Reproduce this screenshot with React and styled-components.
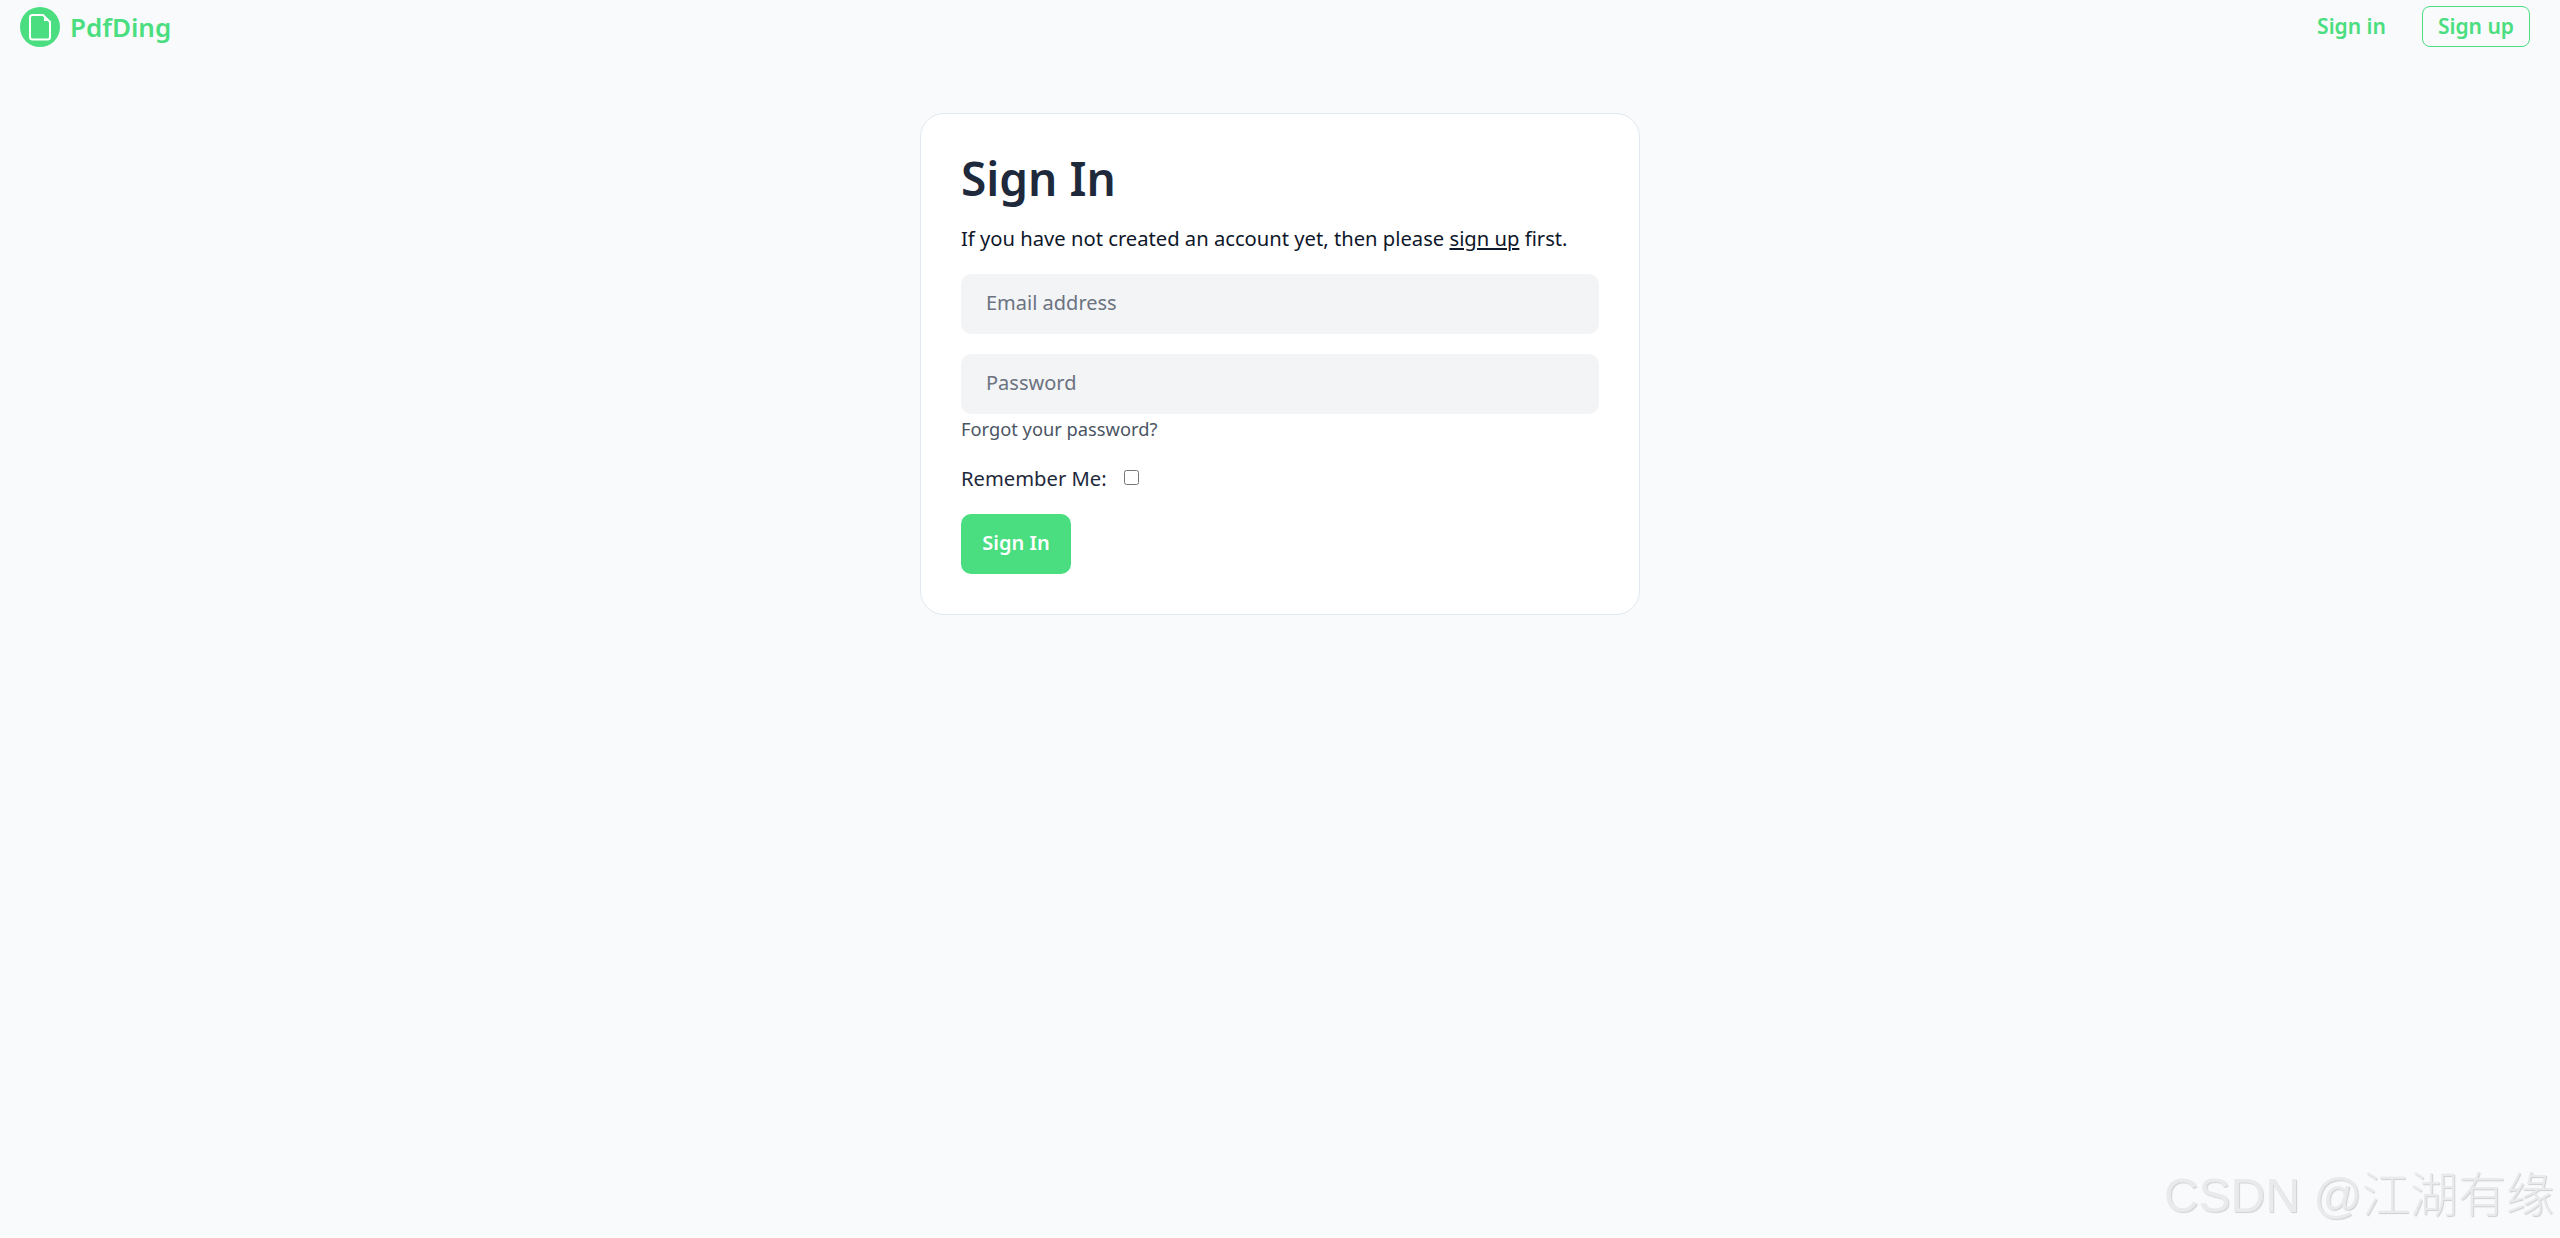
import styled, { createGlobalStyle } from 'styled-components'

const GlobalStyle = createGlobalStyle`
  html, body {
    margin: 0;
    padding: 0;
    height: 100%;
    background-color: #f9fafb;
  }
  body {
    font-family: "Noto Sans", "Open Sans", sans-serif;
  }
`

const Page = styled.div`
  min-height: 1238px;
  box-sizing: border-box;
  background-color: #f9fafb;
`

const Navbar = styled.nav`
  height: 54px;
  padding: 6px 30px 0 20px;
  box-sizing: border-box;
  display: flex;
  justify-content: space-between;
  align-items: flex-start;
`

const Brand = styled.a`
  display: flex;
  align-items: center;
  gap: 10px;
  height: 41px;
  color: #4ade80;
  font-size: 26px;
  font-weight: 600;
  text-decoration: none;
`

const NavLinks = styled.div`
  display: flex;
  align-items: center;
  gap: 35px;
`

const NavLink = styled.a`
  color: #4ade80;
  font-size: 21px;
  font-weight: 600;
  text-decoration: none;
  box-sizing: border-box;
  height: 41px;
  line-height: 38px;
  padding: ${(props) => (props.$outlined ? '0 15px' : '0')};
  border: 1px solid ${(props) => (props.$outlined ? '#4ade80' : 'transparent')};
  border-radius: 8px;
`

const Card = styled.main`
  width: 720px;
  height: 502px;
  margin: 59px auto 0;
  padding: 36px 40px 0;
  box-sizing: border-box;
  background-color: #ffffff;
  border: 1px solid #e2e8f0;
  border-radius: 24px;
`

const Title = styled.h1`
  margin: 0;
  color: #1e293b;
  font-size: 46px;
  line-height: 56px;
  font-weight: 600;
`

const Intro = styled.p`
  margin: 18px 0 0;
  color: #0f172a;
  font-size: 20.2px;
  line-height: 28px;
`

const IntroLink = styled.a`
  color: inherit;
  text-decoration: underline;
`

const Form = styled.form`
  display: flex;
  flex-direction: column;
  margin-top: 22px;
`

const Input = styled.input`
  height: 60px;
  padding: 0 25px 3px;
  margin-bottom: ${(props) => props.$gap || 0}px;
  box-sizing: border-box;
  background-color: #f3f4f6;
  border: none;
  border-radius: 10px;
  outline: none;
  font-family: inherit;
  font-size: 20px;
  color: #1e293b;

  &::placeholder {
    color: #6b7280;
    opacity: 1;
  }
`

const ForgotLink = styled.a`
  margin-top: 1px;
  color: #4b5563;
  font-size: 18.3px;
  line-height: 28px;
  text-decoration: none;
`

const RememberRow = styled.label`
  display: flex;
  align-items: center;
  gap: 17px;
  margin-top: 21px;
  height: 28px;
  color: #1e293b;
  font-size: 20.2px;
`

const Checkbox = styled.input`
  width: 15px;
  height: 15px;
  margin: 0 0 2px;
`

const SubmitButton = styled.button`
  align-self: flex-start;
  width: 110px;
  height: 60px;
  margin-top: 22px;
  padding: 0 0 3px;
  background-color: #4ade80;
  border: none;
  border-radius: 10px;
  color: #ffffff;
  font-family: inherit;
  font-size: 20px;
  font-weight: 600;
`

const Watermark = styled.div`
  position: fixed;
  right: 6px;
  bottom: 14px;
  color: #e9eaeb;
  font-family: "Liberation Sans", "Noto Sans CJK SC", sans-serif;
  font-size: 48px;
  font-weight: 300;
  line-height: 56px;
  text-shadow: 1px 1px 1px #cfd0d1;
  white-space: nowrap;
`

const Logo = () => (
  <svg width="40" height="40" viewBox="0 0 40 40">
    <circle cx="20" cy="20" r="20" fill="#4ade80" />
    <path
      d="M10 10.5A2.5 2.5 0 0 1 12.5 8H23l7 7v15a2.5 2.5 0 0 1-2.5 2.5h-15A2.5 2.5 0 0 1 10 30z"
      fill="none"
      stroke="#ffffff"
      strokeWidth="2"
    />
    <path d="M24 10l4 4h-4z" fill="#ffffff" />
  </svg>
)

const App = () => (
  <Page>
    <GlobalStyle />
    <Navbar>
      <Brand href="#">
        <Logo />
        PdfDing
      </Brand>
      <NavLinks>
        <NavLink href="#">Sign in</NavLink>
        <NavLink href="#" $outlined>Sign up</NavLink>
      </NavLinks>
    </Navbar>
    <Card>
      <Title>Sign In</Title>
      <Intro>
        If you have not created an account yet, then please <IntroLink href="#">sign up</IntroLink> first.
      </Intro>
      <Form>
        <Input type="email" placeholder="Email address" $gap={20} />
        <Input type="password" placeholder="Password" />
        <ForgotLink href="#">Forgot your password?</ForgotLink>
        <RememberRow>
          Remember Me:
          <Checkbox type="checkbox" />
        </RememberRow>
        <SubmitButton type="button">Sign In</SubmitButton>
      </Form>
    </Card>
    <Watermark>CSDN @江湖有缘</Watermark>
  </Page>
)

export default App
